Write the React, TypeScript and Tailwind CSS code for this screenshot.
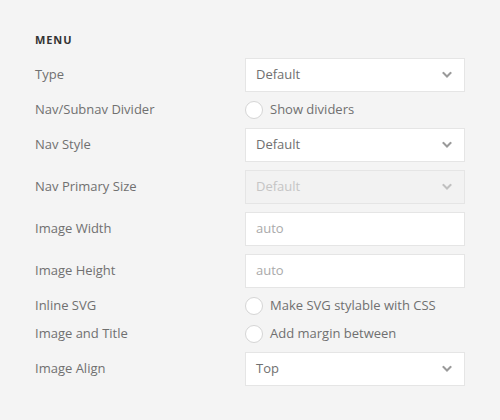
import type { ReactNode } from "react";

const font = { fontFamily: "'Open Sans', 'Liberation Sans', sans-serif" };

function Chevron({ muted }: { muted?: boolean }) {
  return (
    <svg width="10" height="7" viewBox="0 0 10 7" fill="none" className="absolute right-[12px] top-1/2 -translate-y-1/2">
      <path
        d="M1.5 1.5l3.5 3.5 3.5-3.5"
        stroke={muted ? "#c0c0c0" : "#9a9a9a"}
        strokeWidth="2"
        strokeLinecap="square"
      />
    </svg>
  );
}

function Select({ value, disabled }: { value: string; disabled?: boolean }) {
  return (
    <div
      className={
        disabled
          ? "relative h-[34px] w-[220px] border border-[#e5e5e5] bg-[#f2f2f2] pl-[10px] flex items-center text-[13px] text-[#c5c5c5]"
          : "relative h-[34px] w-[220px] border border-[#e5e5e5] bg-white pl-[10px] flex items-center text-[13px] text-[#707070]"
      }
    >
      {value}
      <Chevron muted={disabled} />
    </div>
  );
}

function Input({ placeholder }: { placeholder: string }) {
  return (
    <div className="h-[34px] w-[220px] border border-[#e5e5e5] bg-white pl-[10px] flex items-center text-[13px] text-[#aaa]">
      {placeholder}
    </div>
  );
}

function Radio({ label }: { label: string }) {
  return (
    <div className="h-[20px] flex items-center gap-[7px] text-[13px] text-[#707070]">
      <span className="w-[18px] h-[18px] rounded-full border border-[#d5d5d5] bg-white shrink-0" />
      {label}
    </div>
  );
}

function Row({ label, children }: { label: string; children: ReactNode }) {
  return (
    <div className="flex items-center">
      <div className="w-[210px] text-[13px] text-[#707070]">{label}</div>
      {children}
    </div>
  );
}

export default function App() {
  return (
    <div className="w-[500px] h-[420px] bg-[#f4f4f4] pl-[35px] pt-[32px]" style={font}>
      <h3 className="h-[16px] leading-[16px] text-[11px] font-bold tracking-[0.9px] text-[#333] mb-[10px]">
        MENU
      </h3>
      <div className="flex flex-col gap-2">
        <Row label="Type">
          <Select value="Default" />
        </Row>
        <Row label="Nav/Subnav Divider">
          <Radio label="Show dividers" />
        </Row>
        <Row label="Nav Style">
          <Select value="Default" />
        </Row>
        <Row label="Nav Primary Size">
          <Select value="Default" disabled />
        </Row>
        <Row label="Image Width">
          <Input placeholder="auto" />
        </Row>
        <Row label="Image Height">
          <Input placeholder="auto" />
        </Row>
        <Row label="Inline SVG">
          <Radio label="Make SVG stylable with CSS" />
        </Row>
        <Row label="Image and Title">
          <Radio label="Add margin between" />
        </Row>
        <Row label="Image Align">
          <Select value="Top" />
        </Row>
      </div>
    </div>
  );
}
